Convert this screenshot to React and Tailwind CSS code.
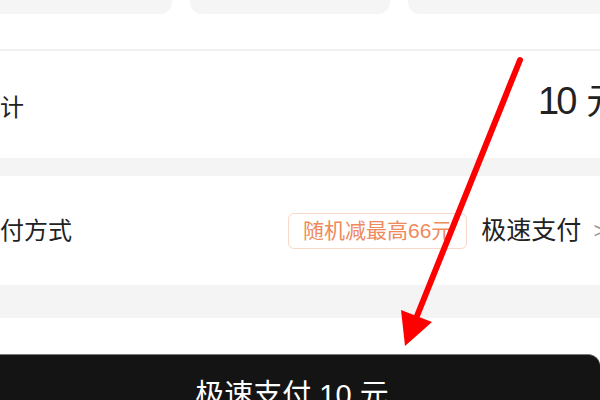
import React from "react";

const font = { fontFamily: '"Liberation Sans", "Noto Sans CJK SC", sans-serif' };

const Arrow = () => (
  <svg className="absolute inset-0 pointer-events-none" width="600" height="400" viewBox="0 0 600 400">
    <line x1="520" y1="60" x2="417" y2="316" stroke="#ff0000" strokeWidth="6" strokeLinecap="round" />
    <polygon points="405,346 401,310 432,322" fill="#ff0000" />
  </svg>
);

export default function App() {
  return (
    <div className="relative w-[600px] h-[400px] overflow-hidden bg-white text-[#222]" style={font}>
      {/* top cards */}
      <div className="flex gap-[18px] -ml-[28px] h-[14px]">
        <div className="w-[200px] shrink-0 bg-[#f5f5f5] rounded-b-xl" />
        <div className="w-[200px] shrink-0 bg-[#f5f5f5] rounded-b-xl" />
        <div className="w-[200px] shrink-0 bg-[#f5f5f5] rounded-b-xl" />
      </div>
      <div className="h-[35px]" />
      <div className="h-[2px] bg-[#f1f1f1]" />

      {/* total row */}
      <div className="flex items-center h-[107px]">
        <span className="-ml-[24px] mt-[6px] text-[24px] leading-none whitespace-nowrap">合计</span>
        <div className="ml-auto w-[62px] whitespace-nowrap -mt-[6px]">
          <span className="text-[38px] leading-none tracking-[-3px]">10</span>
          <span className="ml-[12px] text-[36px] leading-none">元</span>
        </div>
      </div>

      <div className="h-[18px] bg-[#f4f4f4]" />

      {/* pay method row */}
      <div className="flex items-center h-[109px]">
        <span className="-ml-[24px] text-[24px] leading-none whitespace-nowrap">支付方式</span>
        <div className="ml-auto w-[312px] flex items-center whitespace-nowrap shrink-0">
          <span className="h-[36px] px-[14px] flex items-center border border-[#f7d8c9] rounded-md text-[21px] text-[#ee8a5c]">
            随机减最高66元
          </span>
          <span className="ml-[14px] text-[25px] leading-none text-[#222]">极速支付</span>
          <span className="ml-[12px] text-[22px] leading-none text-[#999]">&gt;</span>
        </div>
      </div>

      <div className="h-[33px] bg-[#f4f4f4]" />
      <div className="h-[36px]" />

      {/* bottom bar */}
      <div className="h-[90px] bg-[#141414] border-t border-[#777] rounded-tr-xl pt-[22px] pr-[16px] text-center">
        <span className="text-[29px] leading-[36px] text-white whitespace-nowrap">极速支付 10 元</span>
      </div>

      <Arrow />
    </div>
  );
}
